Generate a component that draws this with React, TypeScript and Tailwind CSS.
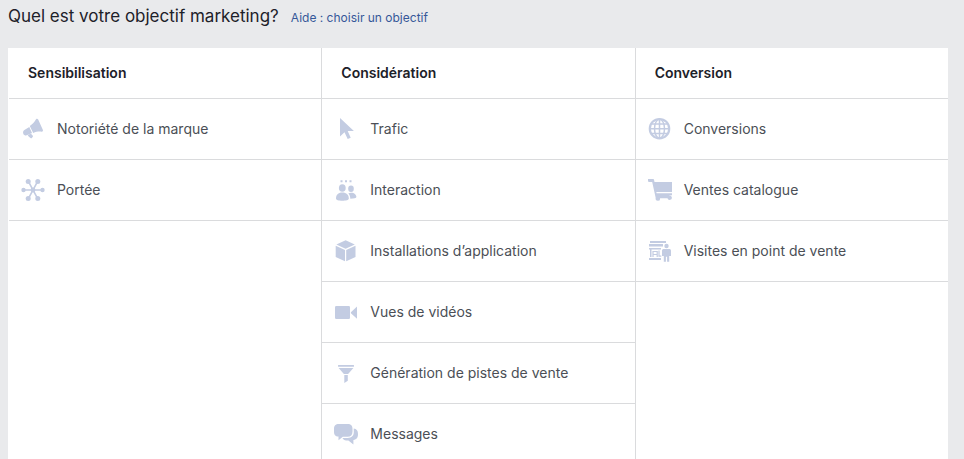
import type { ReactNode } from "react";

type Objective = { label: string; icon: ReactNode };
type Group = { title: string; objectives: Objective[] };

function Icon({ children }: { children: ReactNode }) {
  return (
    <svg viewBox="0 0 24 24" className="size-6 shrink-0 fill-[#c3cce2] stroke-none" aria-hidden="true">
      {children}
    </svg>
  );
}

const megaphone = (
  <Icon>
    <path d="M15 2.300c.7-.8 1.800-.6 2.200.3l4.600 10.200c.5 1.100 0 2-1.200 1.900-3-.3-5.500.1-8.400 1.300L8.800 8.900C11.500 7.200 13.500 5 15 2.300z" />
    <path d="M8.300 10.100l2.700 6-4.600 2c-1.700.7-3.300.2-4-1.200-.8-1.600-.2-3.200 1.400-4.200z" />
    <path d="M6.600 18l3.600-1.600c.2.900.8 1.500 1.400 2 .5.400.6.800.2 1.300l-.9 1.200c-.4.500-.9.500-1.400.1-1.200-.8-2.200-1.700-2.900-3z" />
  </Icon>
);

const network = (
  <Icon>
    <path d="M2 12h20M7.500 3.600l9 16.800M16.500 3.600l-9 16.800" className="stroke-[#c3cce2]" strokeWidth="1.600" />
    <circle cx="12" cy="12" r="2.400" />
    <circle cx="2.500" cy="12" r="2.200" />
    <circle cx="21.500" cy="12" r="2.200" />
    <circle cx="7.200" cy="3.600" r="2.500" />
    <circle cx="16.800" cy="3.600" r="2.500" />
    <circle cx="7.200" cy="20.400" r="2.500" />
    <circle cx="16.800" cy="20.400" r="2.500" />
  </Icon>
);

const cursor = (
  <Icon>
    <path d="M6 1v18.500l4.500-4.300 3.200 6.900 3-1.400-3-6.700h6.200z" />
  </Icon>
);

const people = (
  <Icon>
    <path d="M6.500 2.200h2v2h-2zM11 2.200h2v2h-2zM15.500 2.200h2v2h-2z" />
    <ellipse cx="8.300" cy="10" rx="3.400" ry="3.800" />
    <ellipse cx="17" cy="10.700" rx="2.800" ry="3.200" />
    <path d="M2 20.500c0-3.500 2-6 6.300-6s6.500 2.500 6.500 6c0 1.700-2.900 2.200-6.500 2.200S2 22.200 2 20.500z" />
    <path d="M14.300 15.400c.8-.5 1.700-.7 2.800-.7 3.200 0 5.300 2 5.300 4.300 0 1.300-2.500 1.700-6.100 1.700 0-2.300-.7-4.100-2-5.300z" />
  </Icon>
);

const cube = (
  <Icon>
    <path d="M11.600 1.300l9.200 4.200-9.200 4.200-9.200-4.200z" />
    <path d="M1.700 6.700l9.300 4.200v11.300l-9.300-4.300z" />
    <path d="M21.500 6.700l-9.300 4.200v11.300l9.300-4.300z" />
  </Icon>
);

const camera = (
  <Icon>
    <rect x="1" y="6" width="15" height="13" rx="1.200" />
    <path d="M23 6.500v12.300L16.900 13.200v-1z" />
  </Icon>
);

const funnel = (
  <Icon>
    <rect x="4" y="4" width="16" height="1.800" rx=".5" />
    <path d="M4.600 7h14.800l-5.300 6H9.900z" />
    <path d="M10.300 14.100h3.500v5.600l-3.500 2.200z" />
  </Icon>
);

const chat = (
  <Icon>
    <path d="M5 2h8.500c3.600 0 5 1.600 5 5v2.500c0 3.500-1.600 5.200-5 5.200H8.800l-4.300 3.600v-3.700C1.200 14.300 0 12.800 0 9.500V7c0-3.400 1.500-5 5-5z" />
    <path d="M19.700 6.600C22.800 7 24 8.800 24 12c0 3.400-1 5.300-4.600 6v4.400l-5-4h-2.200c-1.900 0-3-.8-3.700-2.400h5.200c4 0 6.100-2.200 6.100-6.200z" />
  </Icon>
);

const globe = (
  <Icon>
    <g className="fill-none stroke-[#c3cce2]">
      <circle cx="11.500" cy="11.700" r="9.700" strokeWidth="2.200" />
      <ellipse cx="11.500" cy="11.700" rx="5" ry="9.500" strokeWidth="1.500" />
      <path d="M11.500 2v19.500M1.800 11.700h19.500M3.300 7h16.400M3.300 16.400h16.400" strokeWidth="1.500" />
    </g>
  </Icon>
);

const cart = (
  <Icon>
    <path d="M0 1h5.200c.5 0 .7.200.8.700L6.500 4H24v10H8.300l.3 1.300H24v2H21v.3a2.200 2.200 0 1 1-1.500 2.700H12a2.200 2.200 0 1 1-4.300-.2L4.200 4H1.500C.6 4 0 3.500 0 2.500z" />
    <path d="M9 14.500h15" className="stroke-white" strokeWidth=".8" strokeDasharray="1 1" />
  </Icon>
);

const store = (
  <Icon>
    <path d="M2 2h16v2H2zM1 5h14v2.500H1zM1 9h12v1.500H1z" />
    <path d="M2 10h1.500v8H2zM1 19h12v2H1z" />
    <path d="M5 18v-5.500h4.200V18M5 15.500h4.200M11 11.500v5.700h2.300" className="fill-none stroke-[#c3cce2]" strokeWidth="1.200" />
    <circle cx="18.500" cy="7" r="2.200" />
    <path d="M15.700 10h5.600c1 0 1.700.7 1.700 1.700v5.400h-1.800v5.700h-2.100v-5h-1.200v5h-2.100v-5.700H14v-5.400c0-1 .7-1.700 1.700-1.700z" />
  </Icon>
);

const groups: Group[] = [
  {
    title: "Sensibilisation",
    objectives: [
      { label: "Notoriété de la marque", icon: megaphone },
      { label: "Portée", icon: network },
    ],
  },
  {
    title: "Considération",
    objectives: [
      { label: "Trafic", icon: cursor },
      { label: "Interaction", icon: people },
      { label: "Installations d’application", icon: cube },
      { label: "Vues de vidéos", icon: camera },
      { label: "Génération de pistes de vente", icon: funnel },
      { label: "Messages", icon: chat },
    ],
  },
  {
    title: "Conversion",
    objectives: [
      { label: "Conversions", icon: globe },
      { label: "Ventes catalogue", icon: cart },
      { label: "Visites en point de vente", icon: store },
    ],
  },
];

export default function App() {
  return (
    <main className="min-h-screen bg-[#e9eaec] pr-4 pl-2 font-['Inter',sans-serif]">
      <header className="flex h-12 items-baseline gap-3 pt-1">
        <h1 className="text-[17px] leading-6 text-[#1d2129]">Quel est votre objectif marketing?</h1>
        <a href="#aide" className="text-xs leading-6 text-[#365899] hover:underline">
          Aide : choisir un objectif
        </a>
      </header>
      <div className="grid grid-cols-3 bg-white">
        {groups.map((group) => (
          <section key={group.title} className="border-l border-[#dadbdd] first:border-white">
            <h2 className="border-b border-[#dadbdd] py-3 pr-5 pl-[19px] text-sm leading-[26px] font-semibold text-[#1d2129]">
              {group.title}
            </h2>
            <ul>
              {group.objectives.map((objective) => (
                <li key={objective.label} className="border-b border-[#dadbdd]">
                  <button
                    type="button"
                    className="flex h-15 w-full cursor-pointer items-center gap-3 px-3 text-left text-sm text-[#4b4f56] hover:bg-gray-50"
                  >
                    {objective.icon}
                    {objective.label}
                  </button>
                </li>
              ))}
            </ul>
          </section>
        ))}
      </div>
    </main>
  );
}
